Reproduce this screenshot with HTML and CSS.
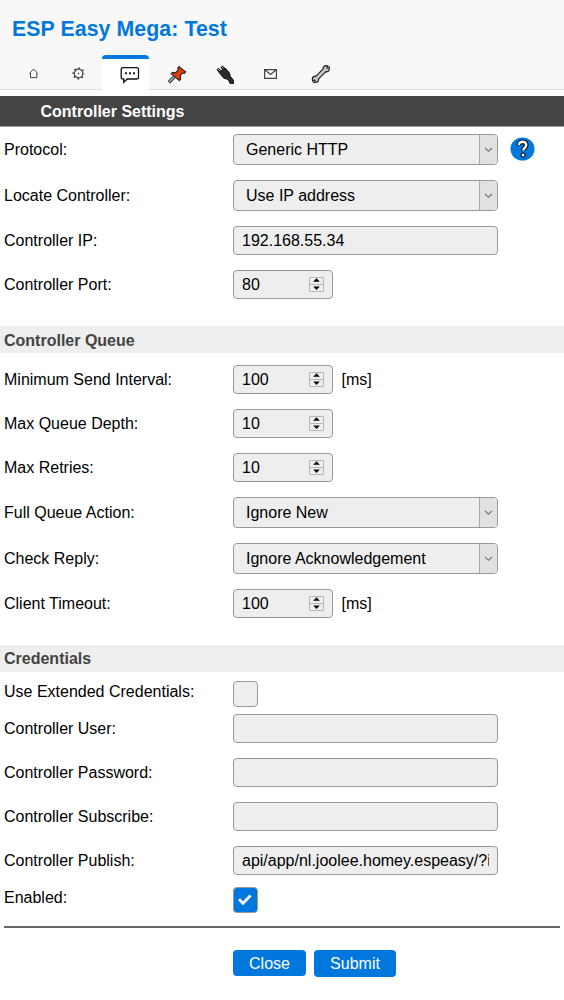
FILE: index.html
```
<!DOCTYPE html>
<html lang="en">
<head>
<meta charset="utf-8">
<title>ESP Easy Mega: Test</title>
<link rel="stylesheet" href="styles.css">
</head>
<body>
<svg class="defs" width="0" height="0">
  <symbol id="chevron" viewBox="0 0 17 29"><path d="M5 13l3.5 3.2L12 13" fill="none" stroke="#777" stroke-width="1.1"/></symbol>
  <symbol id="spin" viewBox="0 0 15 15"><path d="M.5 .5h14v14h-14zM.5 7.5h14" fill="#eee" stroke="#b8b8b8"/><path d="M7.5 1.3l3.3 3.5H4.2zM7.5 13L4.2 9.5h6.6z" fill="#000"/></symbol>
</svg>
<header class="header">
  <h1 class="title">ESP Easy Mega: Test</h1>
  <nav class="tabs">
    <a class="tab tab-home"><svg width="10" height="11" viewBox="0 0 10 11"><path d="M.5 5.500L4.600 1l4.100 4.500M1.500 5v4.600h6.300V5" fill="none" stroke="#444"/></svg></a>
    <a class="tab tab-gear"><svg width="13" height="13" viewBox="0 0 13 13"><circle cx="6.500" cy="6.500" r="4.300" fill="none" stroke="#444" stroke-width="1.200"/><circle cx="6.500" cy="6.500" r="5.400" fill="none" stroke="#444" stroke-width="1.600" stroke-dasharray="1.500 2.741" stroke-dashoffset=".75"/><circle cx="6.500" cy="6.500" r=".8" fill="#444"/></svg></a>
    <a class="tab tab-active"><svg width="20" height="18" viewBox="0 0 20 18"><path d="M3 1.700h13.500q2 0 2 1.500v8.600q0 1.200-2 1.200H7.300L3.700 16.200V13H3q-1.800 0-1.800-1.200V3.200q0-1.500 1.800-1.500z" fill="#fff" stroke="#111" stroke-width="1.300"/><path d="M5 6.300h2v2H5zM9 6.300h2v2H9zM13 6.300h2v2h-2z" fill="#222"/></svg></a>
    <a class="tab tab-pin"><svg width="20" height="20" viewBox="0 0 20 20"><path d="M7.600 11.300L2 17.300" stroke="#222" stroke-width="3.200"/><path d="M7.800 11L2.400 16.900" stroke="#b9c8d0" stroke-width="1.300"/><path d="M12 1.600l6.600 5.200-1.300 1.500-1.900-.3-2 2.500.2 3.700-1.300 1.200-8-6.600 1.300-1.400 3.200.3 2.300-2.800-.2-2z" fill="#e33b0c" stroke="#222" stroke-width="1.100"/></svg></a>
    <a class="tab tab-plug"><svg width="19" height="19" viewBox="0 0 19 19"><path d="M4 6.500L1.600 3.800M8.200 4.500L5.500 1.400" stroke="#111" stroke-width="3"/><path d="M3.900 6L2 3.900M7.800 3.800L6 1.800" stroke="#ccc" stroke-width="1"/><path d="M3 7.400l6-4.400 4.200 4.500 1.200 4.100 3 3.500v3.700h-3.200l-2-4.300-4.500-1.400z" fill="#292929" stroke="#111"/></svg></a>
    <a class="tab tab-mail"><svg width="13" height="10" viewBox="0 0 13 10"><path d="M.6 .6h11.800v8.800H.6zM1.400 1.200l5.100 4.300 5.100-4.300" fill="none" stroke="#444" stroke-width="1.200"/></svg></a>
    <a class="tab tab-wrench"><svg width="20" height="20" viewBox="0 0 20 20"><path d="M4.600 15.200L15 4.800" stroke="#222" stroke-width="5"/><circle cx="4.500" cy="15.300" r="3.700" fill="#222"/><circle cx="15.200" cy="4.700" r="3.700" fill="#222"/><circle cx="4.500" cy="15.300" r="2.500" fill="#bac6c8"/><circle cx="15.200" cy="4.700" r="2.500" fill="#bac6c8"/><path d="M4.600 15.200L15 4.800" stroke="#bac6c8" stroke-width="2.800"/><path d="M4 16L1.800 18.200M15.800 4.100L17.900 2" stroke="#222" stroke-width="2.200"/><path d="M3 17L1 19M16.700 3.200L18.800 1.100" stroke="#f8f8f8" stroke-width=".9"/></svg></a>
  </nav>
</header>
<main>
  <h2 class="banner">Controller Settings</h2>
  <form>
    <div class="row row-select"><label>Protocol:</label><div class="select"><span>Generic HTTP</span><i><svg width="17" height="29"><use href="#chevron"/></svg></i></div>
      <a class="help"><svg width="25" height="24" viewBox="0 0 26 24" preserveAspectRatio="none"><ellipse cx="13" cy="12" rx="12.500" ry="11.600" fill="#07d"/><path d="M9.200 8.300q.4-3.500 4-3.500 3.700.2 3.700 3.300 0 1.700-1.700 2.800-1.400 1-1.400 3.100" fill="none" stroke="#111" stroke-width="4.700"/><circle cx="13.600" cy="18" r="2.600" fill="#111"/><path d="M9.200 7.900q.5-3.100 4-3.100 3.700.2 3.700 3.300 0 1.700-1.700 2.800-1.400 1-1.400 2.700" fill="none" stroke="#fff" stroke-width="2.400"/><circle cx="13.600" cy="18" r="1.500" fill="#fff"/></svg></a></div>
    <div class="row row-select"><label>Locate Controller:</label><div class="select"><span>Use IP address</span><i><svg width="17" height="29"><use href="#chevron"/></svg></i></div></div>
    <div class="row"><label>Controller IP:</label><input class="field" value="192.168.55.34"></div>
    <div class="row"><label>Controller Port:</label><div class="number"><span>80</span><svg width="15" height="15"><use href="#spin"/></svg></div></div>

    <h3 class="section">Controller Queue</h3>
    <div class="row"><label>Minimum Send Interval:</label><div class="number"><span>100</span><svg width="15" height="15"><use href="#spin"/></svg></div><span class="unit">[ms]</span></div>
    <div class="row"><label>Max Queue Depth:</label><div class="number"><span>10</span><svg width="15" height="15"><use href="#spin"/></svg></div></div>
    <div class="row"><label>Max Retries:</label><div class="number"><span>10</span><svg width="15" height="15"><use href="#spin"/></svg></div></div>
    <div class="row row-select"><label>Full Queue Action:</label><div class="select"><span>Ignore New</span><i><svg width="17" height="29"><use href="#chevron"/></svg></i></div></div>
    <div class="row row-select"><label>Check Reply:</label><div class="select"><span>Ignore Acknowledgement</span><i><svg width="17" height="29"><use href="#chevron"/></svg></i></div></div>
    <div class="row"><label>Client Timeout:</label><div class="number"><span>100</span><svg width="15" height="15"><use href="#spin"/></svg></div><span class="unit">[ms]</span></div>

    <h3 class="section section-tight">Credentials</h3>
    <div class="row row-check"><label>Use Extended Credentials:</label><span class="check"></span></div>
    <div class="row"><label>Controller User:</label><input class="field"></div>
    <div class="row"><label>Controller Password:</label><input class="field"></div>
    <div class="row"><label>Controller Subscribe:</label><input class="field"></div>
    <div class="row"><label>Controller Publish:</label><input class="field" value="api/app/nl.joolee.homey.espeasy/?i"></div>
    <div class="row row-enabled"><label>Enabled:</label><span class="check checked"><svg width="15" height="13" viewBox="0 0 15 13"><path d="M1 6.300l4 4L12.500 2.500" fill="none" stroke="#fff" stroke-width="2.800"/></svg></span></div>
    <hr class="rule">
    <div class="actions"><a class="button">Close</a><a class="button submit">Submit</a></div>
  </form>
</main>
</body>
</html>
```
FILE: styles.css
```
* { box-sizing: border-box; }
body { margin: 0; background: #fff; color: #000; font: 16px/18px "Liberation Sans", Arial, sans-serif; }
svg { display: block; flex: none; }
.defs { position: absolute; }
.header { height: 90px; background: #f8f8f8; border-bottom: 1px solid #ddd; }
.title { margin: 0; padding: 16px 0 0 12px; height: 55px; font-size: 21.33px; line-height: 26px; font-weight: bold; color: #07d; letter-spacing: .06px; white-space: nowrap; }
.tabs { display: flex; }
.tab { width: 47px; height: 37px; margin-right: 1px; padding-bottom: 2px; display: flex; justify-content: center; align-items: center; border-top: 4px solid transparent; border-radius: 4px 4px 0 0; }
.tab-home { margin-left: 10px; padding-left: 2px; padding-bottom: 5px; }
.tab-home, .tab-gear { width: 45px; }
.tab-gear { padding-right: 1px; padding-bottom: 4px; }
.tab-active { background: #fff; border-color: #07d; padding-left: 8px; }
.tab-pin { padding-left: 7px; }
.tab-plug { padding-left: 8px; padding-bottom: 3px; }
.tab-mail { width: 42px; padding-left: 7px; padding-bottom: 4px; }
.tab-wrench { width: 58px; padding-left: 6px; padding-bottom: 4px; }
.banner { margin: 6px 0 0; height: 30px; padding-left: 40.5px; background: #444; box-shadow: 0 1px #999; color: #fff; font-size: 16px; line-height: 31px; }
.row { display: flex; height: 44px; padding: 8px 0 0 4px; }
.row label { width: 229px; line-height: 29px; flex: none; }
.row-select { height: 46px; }
.row-select label { line-height: 31px; }
.field, .select, .number, .check { background: #eee; border: 1px solid #999; border-radius: 4px; color: #000; }
.field { width: 265px; height: 29px; margin: 0; padding: 0 8px; font: inherit; outline: none; }
.select { width: 265px; height: 31px; display: flex; justify-content: space-between; padding-left: 12px; line-height: 29px; overflow: hidden; }
.select i { width: 18px; background: #e1e1e1; border-left: 1px solid #aaa; }
.number { width: 100px; height: 29px; display: flex; justify-content: space-between; align-items: center; padding: 0 8px; }
.unit { margin-left: 8.5px; line-height: 29px; }
.help { margin: 3px 0 0 12px; }
.section { margin: 20px 0 4px; height: 27px; padding-left: 4px; background: #eee; color: #444; font-size: 16px; line-height: 29px; }
.section-tight { margin-bottom: 0; line-height: 28px; }
.row-check { height: 34px; padding-top: 9px; }
.row-check label { line-height: 22px; }
.check { width: 25px; height: 26px; }
.checked { background: #07d; padding: 5px 0 0 4px; }
.row-enabled { padding-top: 5px; }
.row-enabled label { line-height: 22px; }
.rule { margin: 0 4px; height: 2px; border: 0; background: #666; }
.actions { display: flex; align-items: flex-start; gap: 8px; padding: 22px 0 0 233px; }
.button { width: 73px; height: 26px; border-radius: 4px; background: #07d; color: #fff; text-align: center; line-height: 27px; }
.submit { width: 82px; height: 27px; }
```
